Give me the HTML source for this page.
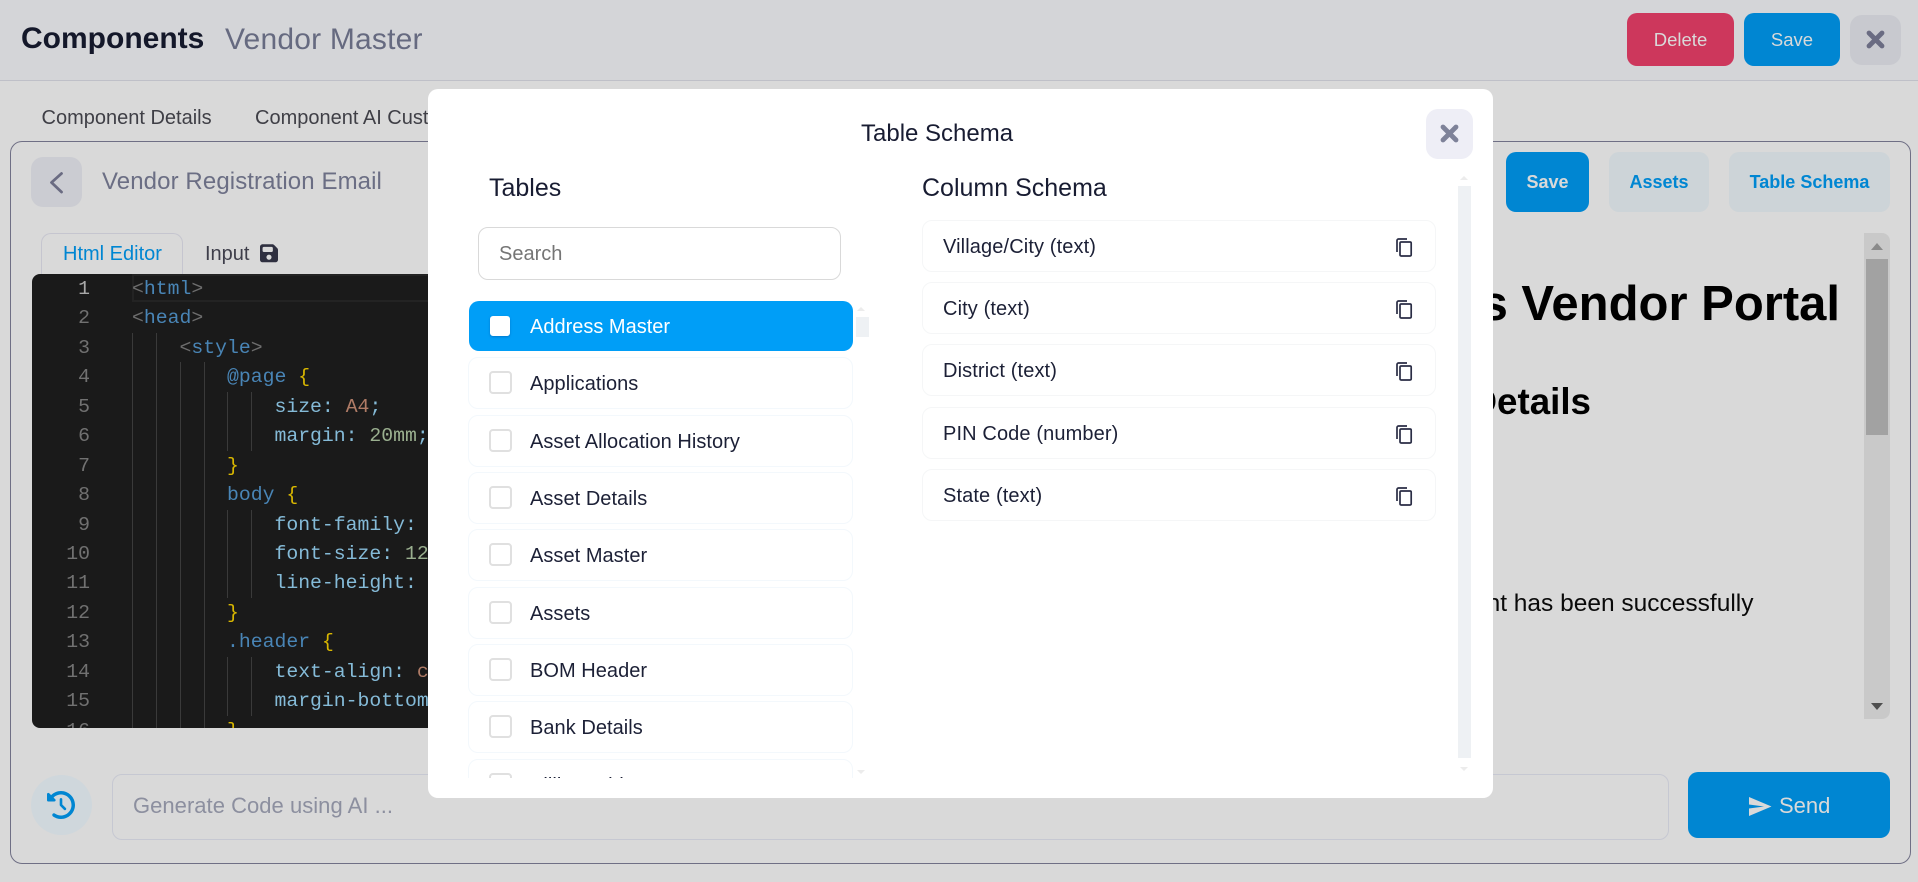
<!DOCTYPE html>
<html lang="en">
<head>
<meta charset="utf-8">
<title>Table Schema</title>
<style>
*{box-sizing:border-box;margin:0;padding:0}
html,body{width:1918px;height:882px;overflow:hidden;background:#d9d9d9;font-family:"Liberation Sans",sans-serif}
.a{position:absolute}
.t{position:absolute;white-space:nowrap;line-height:1}
.btn{position:absolute;display:flex;align-items:center;justify-content:center;white-space:nowrap;border-radius:10px;font-size:18.5px}
.blue{background:#0086d2;color:#d9d9d9}
.lite{background:#cdd4d8;color:#0086d2;font-weight:700;font-size:18px}
#code,#nums{position:absolute;top:1px;font-family:"Liberation Mono",monospace;font-size:19.8px;line-height:29.43px;white-space:pre}
#nums{left:0;width:58px;text-align:right;color:#717171}
#code{left:100px;color:#85bbd8}
.g{color:#6d6d6d}.k{color:#4985b6}.y{color:#d9b700}.o{color:#af7b66}.n{color:#9aaf8f}
.gd{position:absolute;width:1px;background:#3a3a3a}
.it{position:absolute;left:40px;width:385px;height:52px;border:1px solid #f3f8fc;border-radius:10px}
.it i{position:absolute;left:20px;top:13px;width:23px;height:23px;border:2px solid #e0e0e0;border-radius:4px;background:#fff}
.it span{position:absolute;left:61px;top:16px;font-size:20px;line-height:1;color:#1c2036;white-space:nowrap;letter-spacing:.04px}
.row{position:absolute;left:494px;width:514px;height:52px;border:1px solid #f5f6f7;border-radius:10px}
.row span{position:absolute;left:20px;top:16px;font-size:20px;line-height:1;color:#1c2036;white-space:nowrap;letter-spacing:.12px}
.row svg{position:absolute;left:471.5px;top:16.5px}
.tri{position:absolute;width:0;height:0;border-left:5px solid transparent;border-right:5px solid transparent}
</style>
</head>
<body>
<!-- header -->
<div class="a" style="left:0;top:0;width:1918px;height:81px;background:#d4d5d8;border-bottom:1px solid #bfc0c8"></div>
<div class="t" style="left:21px;top:24px;font-size:30px;font-weight:700;color:#14182a">Components</div>
<div class="t" style="left:225px;top:25px;font-size:30px;color:#666a80;letter-spacing:.2px">Vendor Master</div>
<div class="btn" style="left:1627px;top:13px;width:107px;height:53px;background:#cd375c;color:#d9d9d9">Delete</div>
<div class="btn blue" style="left:1744px;top:13px;width:96px;height:53px">Save</div>
<div class="a" style="left:1850px;top:15px;width:51px;height:50px;border-radius:12px;background:#c8c9cf"></div>
<svg class="a" style="left:1850px;top:15px" width="51" height="50"><path d="M19 18L32 31M32 18L19 31" stroke="#6a6b82" stroke-width="4.8" stroke-linecap="round"/></svg>

<!-- tabs -->
<div class="t" style="left:41.5px;top:108px;font-size:20px;color:#3f3f46">Component Details</div>
<div class="t" style="left:255px;top:108px;font-size:20px;color:#3f3f46">Component AI Customization</div>

<!-- panel -->
<div class="a" style="left:10px;top:141px;width:1901px;height:723px;border:1px solid #6f6f85;border-radius:12px"></div>
<div class="a" style="left:31px;top:157px;width:51px;height:50px;border-radius:12px;background:#cbccd2"></div>
<svg class="a" style="left:31px;top:157px" width="51" height="50"><path d="M30.5 16.5L20.5 25.5L30.5 35" fill="none" stroke="#6a6b82" stroke-width="2.8" stroke-linecap="round" stroke-linejoin="round"/></svg>
<div class="t" style="left:102px;top:170px;font-size:24px;color:#6b6e84;letter-spacing:.1px">Vendor Registration Email</div>

<div class="a" style="left:41px;top:233px;width:142px;height:42px;border:1px solid #c5c5cf;border-bottom:none;border-radius:10px 10px 0 0"></div>
<div class="t" style="left:63px;top:244px;font-size:20px;color:#0086d2">Html Editor</div>
<div class="t" style="left:205px;top:244px;font-size:20px;color:#3e3e4a">Input</div>
<svg class="a" style="left:260px;top:243px" width="18" height="20.6" viewBox="0 0 448 512"><path fill="#2f3040" d="M64 32C28.7 32 0 60.7 0 96V416c0 35.3 28.7 64 64 64H384c35.3 0 64-28.7 64-64V173.3c0-17-6.7-33.3-18.7-45.3L352 50.7C340 38.7 323.7 32 306.7 32H64zm0 96c0-17.7 14.3-32 32-32H288c17.7 0 32 14.3 32 32v64c0 17.7-14.3 32-32 32H96c-17.7 0-32-14.3-32-32V128zM224 288a64 64 0 1 1 0 128 64 64 0 1 1 0-128z"/></svg>

<!-- editor -->
<div class="a" style="left:32px;top:274px;width:500px;height:454px;background:#1a1a1a;border-radius:8px 0 0 8px;overflow:hidden">
  <div class="a" style="left:100px;top:0;width:400px;height:28px;border:2px solid #232323;border-right:none"></div>
  <div class="gd" style="left:100px;top:59px;height:395px"></div>
  <div class="gd" style="left:124px;top:59px;height:395px"></div>
  <div class="gd" style="left:148px;top:88px;height:366px"></div>
  <div class="gd" style="left:172px;top:88px;height:366px"></div>
  <div class="gd" style="left:195px;top:118px;height:59px"></div>
  <div class="gd" style="left:219px;top:118px;height:59px"></div>
  <div class="gd" style="left:195px;top:236px;height:88px"></div>
  <div class="gd" style="left:219px;top:236px;height:88px"></div>
  <div class="gd" style="left:195px;top:383px;height:59px"></div>
  <div class="gd" style="left:219px;top:383px;height:59px"></div>
  <div id="nums"><span style="color:#a8a8a8">1</span>
2
3
4
5
6
7
8
9
10
11
12
13
14
15
16</div>
  <div id="code"><span class="g">&lt;</span><span class="k">html</span><span class="g">&gt;</span>
<span class="g">&lt;</span><span class="k">head</span><span class="g">&gt;</span>
    <span class="g">&lt;</span><span class="k">style</span><span class="g">&gt;</span>
        <span class="k">@page</span> <span class="y">{</span>
            size: <span class="o">A4</span>;
            margin: <span class="n">20mm</span>;
        <span class="y">}</span>
        <span class="k">body</span> <span class="y">{</span>
            font-family: <span class="o">Arial</span>;
            font-size: <span class="n">12pt</span>;
            line-height: <span class="n">1.5</span>;
        <span class="y">}</span>
        <span class="k">.header</span> <span class="y">{</span>
            text-align: <span class="o">center</span>;
            margin-bottom: <span class="n">20px</span>;
        <span class="y">}</span></div>
</div>

<!-- preview -->
<div class="t" style="right:78px;top:280px;font-size:49px;font-weight:700;color:#000">s Vendor Portal</div>
<div class="t" style="right:327px;top:384px;font-size:36.75px;font-weight:700;color:#000">Details</div>
<div class="t" style="right:164.5px;top:592px;font-size:24.5px;color:#0a0a0a">nt has been successfully</div>

<!-- top right panel buttons -->
<div class="btn blue" style="left:1506px;top:152px;width:83px;height:60px;font-weight:700;font-size:18px">Save</div>
<div class="btn lite" style="left:1609px;top:152px;width:100px;height:60px">Assets</div>
<div class="btn lite" style="left:1729px;top:152px;width:161px;height:60px">Table Schema</div>

<!-- preview scrollbar -->
<div class="a" style="left:1864px;top:233px;width:26px;height:486px;background:#c9c9c9;border-radius:0 8px 8px 0"></div>
<div class="a" style="left:1866px;top:259px;width:22px;height:176px;background:#a2a2a2"></div>
<div class="tri" style="left:1871px;top:243px;border-left-width:6px;border-right-width:6px;border-bottom:7px solid #8a8a8a"></div>
<div class="tri" style="left:1871px;top:703px;border-left-width:6px;border-right-width:6px;border-top:7px solid #4f4f4f"></div>

<!-- bottom bar -->
<div class="a" style="left:31px;top:775px;width:61px;height:60px;border-radius:50%;background:#cfd7dc"></div>
<svg class="a" style="left:47px;top:791px" width="28" height="28" viewBox="0 0 512 512"><path fill="#0086d2" d="M75 75L41 41C25.9 25.9 0 36.6 0 57.9V168c0 13.3 10.7 24 24 24H134.1c21.4 0 32.1-25.9 17-41l-30.8-30.8C155 85.5 203 64 256 64c106 0 192 86 192 192s-86 192-192 192c-40.8 0-78.6-12.7-109.7-34.4c-14.5-10.1-34.4-6.6-44.6 7.9s-6.6 34.4 7.9 44.6C151.2 495 201.7 512 256 512c141.4 0 256-114.6 256-256S397.4 0 256 0C185.3 0 121.3 28.7 75 75zm181 53c-13.3 0-24 10.7-24 24V256c0 6.4 2.5 12.5 7 17l72 72c9.4 9.4 24.6 9.4 33.9 0s9.4-24.6 0-33.9l-65-65V152c0-13.3-10.7-24-24-24z"/></svg>
<div class="a" style="left:112px;top:774px;width:1557px;height:66px;border:1px solid #c6c8d2;border-radius:10px"></div>
<div class="t" style="left:133px;top:795px;font-size:22px;color:#8c8f9f;letter-spacing:.03px">Generate Code using AI ...</div>
<div class="a" style="left:1688px;top:772px;width:202px;height:66px;border-radius:10px;background:#0086d2"></div>
<svg class="a" style="left:1749px;top:797px" width="23" height="20"><path d="M0 0L22.5 9.5L0 19V11.5L15 9.5L0 7.5Z" fill="#d9d9d9"/></svg>
<div class="t" style="left:1779px;top:794.5px;font-size:22px;color:#d9d9d9">Send</div>

<!-- modal -->
<div class="a" style="left:428px;top:89px;width:1065px;height:709px;background:#fff;border-radius:10px;overflow:hidden">
  <div class="t" style="left:433px;top:33px;font-size:24px;color:#181c32">Table Schema</div>
  <div class="a" style="left:998px;top:20px;width:47px;height:50px;border-radius:12px;background:#eeeef6"></div>
  <svg class="a" style="left:998px;top:20px" width="47" height="50"><path d="M17 18L30 31M30 18L17 31" stroke="#7e8299" stroke-width="4.8" stroke-linecap="round"/></svg>

  <div class="t" style="left:61px;top:87px;font-size:25px;color:#181c32">Tables</div>
  <div class="t" style="left:494px;top:87px;font-size:25px;color:#181c32">Column Schema</div>

  <div class="a" style="left:50px;top:138px;width:363px;height:53px;border:1px solid #d9d9d9;border-radius:10px"></div>
  <div class="t" style="left:71px;top:155px;font-size:20px;color:#757575">Search</div>

  <!-- list -->
  <div class="a" style="left:0;top:200px;width:441px;height:489px;overflow:hidden">
    <div class="a" style="left:41px;top:12px;width:384px;height:50px;border-radius:10px;background:#009ef7"></div>
    <div class="a" style="left:62px;top:27px;width:20px;height:20px;border-radius:3px;background:#fff;box-shadow:0 1px 2px rgba(0,90,170,.55)"></div>
    <div class="t" style="left:102px;top:28px;font-size:20px;color:#fff">Address Master</div>
    <div class="it" style="top:68px"><i></i><span>Applications</span></div>
    <div class="it" style="top:126px"><i></i><span>Asset Allocation History</span></div>
    <div class="it" style="top:183px"><i></i><span>Asset Details</span></div>
    <div class="it" style="top:240px"><i></i><span>Asset Master</span></div>
    <div class="it" style="top:298px"><i></i><span>Assets</span></div>
    <div class="it" style="top:355px"><i></i><span>BOM Header</span></div>
    <div class="it" style="top:412px"><i></i><span>Bank Details</span></div>
    <div class="it" style="top:470px"><i></i><span>Billing Address Master</span></div>
  </div>
  <div class="tri" style="left:429px;top:218px;border-left-width:4px;border-right-width:4px;border-bottom:4px solid #ececec"></div>
  <div class="a" style="left:428px;top:228px;width:13px;height:20px;background:#eef1f4"></div>
  <div class="tri" style="left:429px;top:681px;border-left-width:4px;border-right-width:4px;border-top:4px solid #ececec"></div>

  <!-- column rows -->
  <div class="row" style="top:131px"><span>Village/City (text)</span><svg width="18" height="19" viewBox="0 0 18 19"><path d="M2 14V2.5C2 1.7 2.7 1 3.5 1H12" fill="none" stroke="#2a2d45" stroke-width="1.7"/><rect x="5" y="4" width="11.2" height="14" rx="1.2" fill="none" stroke="#2a2d45" stroke-width="1.7"/></svg></div>
  <div class="row" style="top:193px"><span>City (text)</span><svg width="18" height="19" viewBox="0 0 18 19"><path d="M2 14V2.5C2 1.7 2.7 1 3.5 1H12" fill="none" stroke="#2a2d45" stroke-width="1.7"/><rect x="5" y="4" width="11.2" height="14" rx="1.2" fill="none" stroke="#2a2d45" stroke-width="1.7"/></svg></div>
  <div class="row" style="top:255px"><span>District (text)</span><svg width="18" height="19" viewBox="0 0 18 19"><path d="M2 14V2.5C2 1.7 2.7 1 3.5 1H12" fill="none" stroke="#2a2d45" stroke-width="1.7"/><rect x="5" y="4" width="11.2" height="14" rx="1.2" fill="none" stroke="#2a2d45" stroke-width="1.7"/></svg></div>
  <div class="row" style="top:318px"><span>PIN Code (number)</span><svg width="18" height="19" viewBox="0 0 18 19"><path d="M2 14V2.5C2 1.7 2.7 1 3.5 1H12" fill="none" stroke="#2a2d45" stroke-width="1.7"/><rect x="5" y="4" width="11.2" height="14" rx="1.2" fill="none" stroke="#2a2d45" stroke-width="1.7"/></svg></div>
  <div class="row" style="top:380px"><span>State (text)</span><svg width="18" height="19" viewBox="0 0 18 19"><path d="M2 14V2.5C2 1.7 2.7 1 3.5 1H12" fill="none" stroke="#2a2d45" stroke-width="1.7"/><rect x="5" y="4" width="11.2" height="14" rx="1.2" fill="none" stroke="#2a2d45" stroke-width="1.7"/></svg></div>

  <div class="tri" style="left:1032px;top:87px;border-left-width:4px;border-right-width:4px;border-bottom:4px solid #ececec"></div>
  <div class="a" style="left:1030px;top:97px;width:13px;height:572px;background:#eef1f4"></div>
  <div class="tri" style="left:1032px;top:678px;border-left-width:4px;border-right-width:4px;border-top:4px solid #ececec"></div>
</div>
</body>
</html>
